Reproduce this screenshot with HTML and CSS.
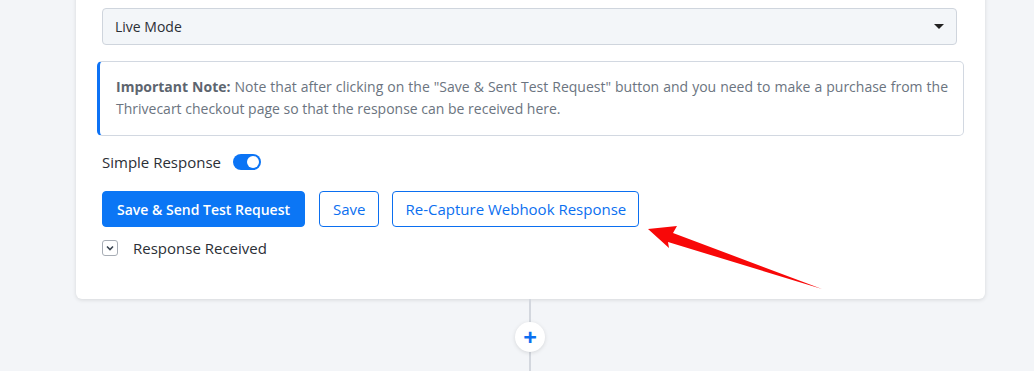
FILE: index.html
```html
<!DOCTYPE html>
<html lang="en">

<head>
    <meta charset="UTF-8">
    <meta name="viewport" content="width=device-width, initial-scale=1.0">
    <title>Webhook Settings</title>
    <link rel="stylesheet" href="styles.css">
</head>

<body>
    <div class="card">
        <div class="select">
            <span>Live Mode</span>
            <span class="caret"></span>
        </div>

        <div class="note">
            <b>Important Note:</b> Note that after clicking on the "Save &amp; Sent Test Request" button and you need to make a purchase from the Thrivecart checkout page so that the response can be received here.
        </div>

        <div class="switch-row">
            <span>Simple Response</span>
            <span class="toggle"></span>
        </div>

        <div class="actions">
            <button class="btn btn-primary">Save &amp; Send Test Request</button>
            <button class="btn btn-outline">Save</button>
            <button class="btn btn-outline btn-wide">Re-Capture Webhook Response</button>
        </div>

        <div class="received">
            <span class="check">
                <svg width="10" height="10" viewBox="0 0 10 10">
                    <path d="M2 3.5 L5 6.5 L8 3.5" fill="none" stroke="#3a4450" stroke-width="1.6" />
                </svg>
            </span>
            <span>Response Received</span>
        </div>
    </div>

    <div class="connector">
        <div class="add-step">+</div>
    </div>

    <!-- annotation arrow -->
    <svg class="arrow" width="1034" height="371" viewBox="0 0 1034 371">
        <polygon points="648,229 677,226 673,233 822,289 668,242 669,248" fill="#f80808" />
    </svg>
</body>

</html>
```

FILE: styles.css
```css
body {
    margin: 0;
    background-color: #f3f5f8;
    font-family: "Open Sans", "Lato", sans-serif;
    font-size: 14px;
    color: #2b2f36;
    height: 371px;
    overflow: hidden;
}

.card {
    margin-left: 76px;
    width: 909px;
    margin-top: -20px;
    padding: 28px 28px 41px 26px;
    box-sizing: border-box;
    background: white;
    border-radius: 6px;
    box-shadow: 0 1px 4px rgba(0, 0, 0, 0.12);
}

.select {
    height: 37px;
    box-sizing: border-box;
    background: #f3f6f9;
    border: 1px solid #cfd5dd;
    border-radius: 4px;
    display: flex;
    align-items: center;
    justify-content: space-between;
    padding: 0 12px 0 12px;
}

.caret {
    width: 0;
    height: 0;
    border-left: 5px solid transparent;
    border-right: 5px solid transparent;
    border-top: 5px solid #222;
}

.note {
    margin: 16px -7px 0 -5px;
    border: 1px solid #d2d8e1;
    border-left: 3px solid #0d72f5;
    border-radius: 5px;
    padding: 14px 15px 15px 16px;
    line-height: 22px;
    color: #6b7480;
    text-align: justify;
}

.note b {
    color: #5d656f;
}

.switch-row {
    display: flex;
    align-items: center;
    gap: 12px;
    margin-top: 17px;
    height: 17px;
    font-size: 15px;
}

.toggle {
    width: 28px;
    height: 16px;
    border-radius: 8px;
    background: #0b74f5;
    position: relative;
}

.toggle::after {
    content: "";
    position: absolute;
    right: 2px;
    top: 2px;
    width: 12px;
    height: 12px;
    border-radius: 50%;
    background: white;
}

.actions {
    display: flex;
    gap: 13px;
    margin-top: 21px;
}

.btn {
    height: 36px;
    padding: 0 13px;
    font-family: inherit;
    font-size: 15px;
    border-radius: 4px;
    cursor: pointer;
}

.btn-primary {
    background-color: #0b76f5;
    color: white;
    border: 1px solid #0b76f5;
    font-size: 14px;
    font-weight: 600;
    padding: 0 14px;
    margin-right: 1px;
}

.btn-outline {
    background: white;
    color: #0b6ff0;
    border: 1px solid #0b6ff0;
}

.btn-wide {
    padding: 0 12px;
}

.received {
    display: flex;
    align-items: center;
    gap: 15px;
    margin-top: 11px;
    font-size: 15px;
}

.check {
    width: 16px;
    height: 16px;
    box-sizing: border-box;
    border: 1px solid #a7adb5;
    border-radius: 3px;
    display: flex;
    align-items: center;
    justify-content: center;
}

.connector {
    width: 2px;
    height: 80px;
    background: #d3d7de;
    margin-left: 529px;
    position: relative;
}

.add-step {
    position: absolute;
    left: -14px;
    top: 23px;
    width: 30px;
    height: 30px;
    border-radius: 50%;
    background: white;
    box-shadow: 0 1px 4px rgba(0, 0, 0, 0.12);
    color: #0b6ff0;
    font-size: 24px;
    font-weight: bold;
    line-height: 29px;
    text-align: center;
}

.arrow {
    position: absolute;
    left: 0;
    top: 0;
    pointer-events: none;
}
```
